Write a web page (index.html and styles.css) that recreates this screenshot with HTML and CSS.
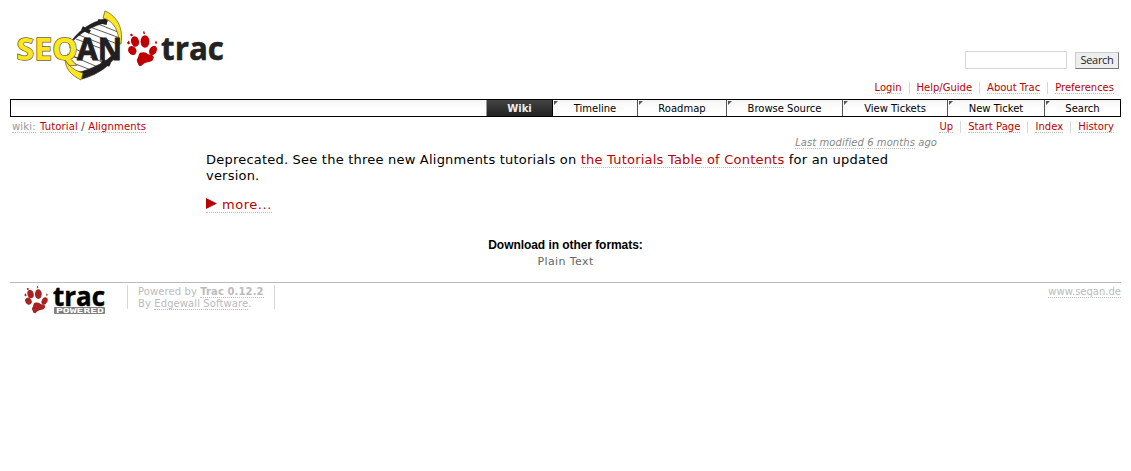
FILE: index.html
```html
<!DOCTYPE html>
<html lang="en">
<head>
<meta charset="utf-8">
<title>Tutorial/Alignments – SeqAn</title>
<link rel="stylesheet" href="styles.css">
</head>
<body>
<svg class="defs" aria-hidden="true"><defs>
<symbol id="paw" viewBox="0 0 30 36">
<path d="M15 22C19 21 20 24 22 24C26 24 28 26 26 29C25 32 20 31 17 33C14 36 12 37 11 33C10 31 9 30 11 27C12 24 12 22 15 22Z"/>
<ellipse cx="5.300" cy="20" rx="4" ry="4.700" transform="rotate(-32 5.300 20)"/>
<ellipse cx="8" cy="11" rx="4" ry="5.300" transform="rotate(-16 8 11)"/>
<ellipse cx="18" cy="11" rx="4.400" ry="6.200"/>
<ellipse cx="26" cy="20" rx="3.600" ry="5" transform="rotate(28 26 20)"/>
<path d="M0 12L2 10L3 13L1 14ZM3 4L5 3L6 5L4 6ZM16 2L17 0L18 3L17 4ZM28 12L29 10L30 12L29 14Z"/>
</symbol>
</defs></svg>
<header class="banner">
<a class="logo">
<svg width="216" height="76" viewBox="10 7 216 76">
<path class="helix" d="M106 20C90 24 74 34 69 46L67 58L79 75C100 70 117 56 120 42L118 29Z"/>
<path class="rungs" d="M98 24L118 32M90 27L120 38M84 31L120 45M79 35L112 48M76 39L100 48M105 63L90 57M98 67L72 56M91 70L68 61M69 47L80 51M67 54L78 58"/>
<path class="strand" d="M104 19C91 22 76 32 69 45L72 42C80 33 90 28 98 25L107 22L108 18ZM118 46C116 56 99 67 77 73L78 75L83 74L82 79C100 74 115 63 119 48Z"/>
<path class="bars" d="M98 21L107 23M82 28L90 32M77 73L86 75M102 61L110 65"/>
<path class="ribbon" d="M105 11C115 15 124 26 121 44L119 44C119 31 114 21 103 18Z"/>
<path class="ribbon" d="M66 58C66 63 72 70 83 73L81 80C71 75 65 69 65 58Z"/>
<text class="seq" x="16.500" y="60" textLength="61" lengthAdjust="spacingAndGlyphs">SEQ</text>
<text class="an" x="77" y="60" textLength="45" lengthAdjust="spacingAndGlyphs">AN</text>
<use href="#paw" class="paw" x="127" y="30.500" width="30" height="36"/>
<text class="trac" x="161" y="60" textLength="63" lengthAdjust="spacingAndGlyphs">trac</text>
</svg>
</a>
<form class="search"><input type="text" class="query" aria-label="Search"><button type="button" class="go">Search</button></form>
</header>
<nav class="meta"><span class="item"><a>Login</a></span><span class="item"><a>Help/Guide</a></span><span class="item"><a>About Trac</a></span><span class="item"><a>Preferences</a></span></nav>
<nav class="tabs"><a class="tab active">Wiki</a><a class="tab timeline">Timeline</a><a class="tab roadmap">Roadmap</a><a class="tab browse">Browse Source</a><a class="tab view">View Tickets</a><a class="tab new">New Ticket</a><a class="tab find">Search</a></nav>
<div class="context">
<div class="path"><a class="first">wiki:</a> <a class="crumb">Tutorial</a> / <a>Alignments</a></div>
<nav class="pages"><span class="item"><a>Up</a></span><span class="item"><a>Start Page</a></span><span class="item"><a>Index</a></span><span class="item"><a>History</a></span></nav>
</div>
<main class="wiki">
<p class="modified"><a>Last modified</a> <a>6 months</a> ago</p>
<p class="notice">Deprecated. See the three new Alignments tutorials on <a>the Tutorials Table of Contents</a> for an updated version.</p>
<p class="more"><a><svg width="11" height="11" viewBox="0 0 11 11"><path d="M0 0L11 5.5L0 11Z"/></svg><span>more...</span></a></p>
</main>
<section class="formats"><h3>Download in other formats:</h3><a>Plain Text</a></section>
<footer class="footer">
<svg class="powered" width="84" height="32" viewBox="22 284 84 32">
<use href="#paw" class="paw-small" x="24" y="285.500" width="24" height="28"/>
<text class="trac-small" x="53" y="305.500" textLength="52" lengthAdjust="spacingAndGlyphs">trac</text>
<rect class="plate" x="54" y="307" width="51" height="7" rx="1"/>
<text class="plate-text" x="56" y="313" textLength="48" lengthAdjust="spacingAndGlyphs">POWERED</text>
</svg>
<p class="credit">Powered by <a><strong>Trac 0.12.2</strong></a><br>By <a>Edgewall Software</a>.</p>
<p class="site"><a>www.seqan.de</a></p>
</footer>
</body>
</html>
```
FILE: styles.css
```css
* { box-sizing: border-box; }
body { margin: 0; padding: 7px 10px 0; background: #fff; color: #000; font: 10px/12px "DejaVu Sans", Verdana, sans-serif; }
p, h3 { margin: 0; }
a { color: #b00; border-bottom: 1px dotted #bbb; text-decoration: none; }
.defs { position: absolute; width: 0; height: 0; }
.banner { display: flex; justify-content: space-between; height: 73px; }
.logo { border: 0; }
.logo svg, .powered { display: block; overflow: visible; }
.helix { fill: #fff; }
.rungs { fill: none; stroke: #333; stroke-width: .8; }
.strand { fill: #231f20; stroke: #231f20; stroke-width: .6; }
.bars { fill: none; stroke: #231f20; stroke-width: 4; }
.ribbon { fill: #fde51f; stroke: #5d5521; stroke-width: .7; }
.seq, .an { font-family: "Noto Sans", sans-serif; font-size: 30px; font-weight: 700; }
.seq { fill: #fde51f; stroke: #6b6228; stroke-width: 1.4; paint-order: stroke; }
.an { fill: #231f20; stroke: #231f20; stroke-width: .8; }
.trac, .trac-small { font-family: "Open Sans", sans-serif; }
.trac { font-size: 33px; font-weight: 700; fill: #222; stroke: #222; stroke-width: .5; }
.paw { fill: #c00000; }
.search { display: flex; gap: 8px; margin: 44px 2px 0 0; height: 18px; }
.query { width: 102px; height: 18px; border: 1px solid #d7d7d7; padding: 0; }
.go { width: 44px; height: 17px; margin-top: 1px; padding: 0 0 2px; background: #eee; border: 1px solid; border-color: #ccc #777 #777 #ccc; color: #222; font: 11px/13px "Open Sans", sans-serif; letter-spacing: -.3px; }
.meta, .pages { display: flex; justify-content: flex-end; line-height: 12px; }
.meta { height: 19px; padding: 2px 0 0; }
.item { height: 12px; padding: 0 7px; border-left: 1px solid #d7d7d7; }
.item:first-child { border-left: 0; }
.item a { display: block; height: 12px; }
.pages .item { letter-spacing: .04px; }
.tabs { display: flex; justify-content: flex-end; height: 18px; border: 1px solid #000; background: linear-gradient(#f5f5f5, #fff 60%); }
.tab { position: relative; border: 0; border-left: 1px solid #555; color: #000; text-align: center; line-height: 17px; }
.tab:not(.active)::after { content: ""; position: absolute; left: 1px; top: 1px; border-top: 4px solid #555; border-right: 4px solid transparent; }
.active { width: 66px; background: linear-gradient(#444, #222); color: #eee; font-weight: 700; border-left: 1px solid #999; }
.timeline { width: 85px; border-left-color: #000; }
.roadmap { width: 89px; }
.browse { width: 116px; }
.view { width: 105px; }
.new { width: 97px; }
.find { width: 76px; }
.context { display: flex; justify-content: space-between; height: 18px; padding: 4px 0 0 2px; color: #333; }
.path { white-space: pre; letter-spacing: .15px; }
.path a { display: inline-block; height: 12px; }
.path .first { color: #999; }
.path .crumb { margin-left: 1px; }
.wiki { padding: 0 184px 0 196px; font-size: 13px; line-height: 16px; }
.modified { color: #888; font-size: 10px; font-style: italic; letter-spacing: .07px; line-height: 13px; height: 17px; text-align: right; padding-top: 1px; }
.modified a { color: #888; }
.notice { width: 700px; height: 32px; letter-spacing: .215px; }
.notice a { display: inline-block; height: 16px; vertical-align: top; }
.more { height: 17px; margin-top: 12px; line-height: 18px; letter-spacing: .55px; }
.more a { display: inline-flex; gap: 5px; height: 17px; }
.more svg { fill: #b00; margin-top: 2px; }
.formats { height: 69px; padding-top: 25px; text-align: center; }
.formats h3 { font: 700 12px/14px "Liberation Sans", Arial, sans-serif; letter-spacing: -.06px; }
.formats a { display: block; color: #666; border: 0; font-size: 11px; line-height: 20px; letter-spacing: .4px; }
.footer { display: flex; height: 34px; border-top: 1px solid #bbb; color: #bbb; }
.footer a { color: #bbb; }
.powered { margin: 1px 0 0 12px; }
.paw-small { fill: #a82222; }
.trac-small { font-size: 27px; font-weight: 700; stroke: #000; stroke-width: .5; }
.plate { fill: #808080; }
.plate-text { font: 700 7px "DejaVu Sans Mono", monospace; fill: #fff; }
.credit { width: 148px; height: 24px; margin: 2px 0 0 21px; padding: 1px 0 0 10px; border-left: 1px solid #d7d7d7; border-right: 1px solid #d7d7d7; white-space: nowrap; letter-spacing: .1px; line-height: 12px; }
.site { margin: 2px 0 0 auto; line-height: 13px; }
```
